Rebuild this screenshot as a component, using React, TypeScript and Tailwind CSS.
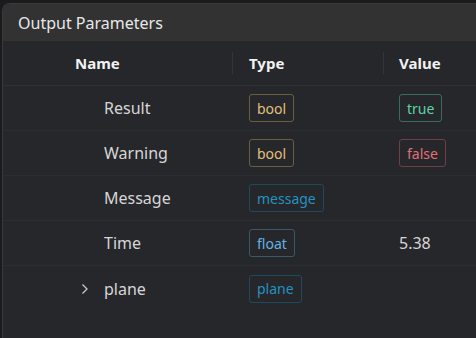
import React from 'react';

type Badge = { label: string; tone: 'bool' | 'msg' | 'float' | 'true' | 'false' };

interface Row {
  name: string;
  type: Badge;
  value?: Badge | string;
  expandable?: boolean;
}

const rows: Row[] = [
  { name: 'Result', type: { label: 'bool', tone: 'bool' }, value: { label: 'true', tone: 'true' } },
  { name: 'Warning', type: { label: 'bool', tone: 'bool' }, value: { label: 'false', tone: 'false' } },
  { name: 'Message', type: { label: 'message', tone: 'msg' } },
  { name: 'Time', type: { label: 'float', tone: 'float' }, value: '5.38' },
  { name: 'plane', type: { label: 'plane', tone: 'msg' }, expandable: true },
];

const toneClass: Record<Badge['tone'], string> = {
  bool: 'text-[#e2bf7d] border-[#6b5c44]',
  true: 'text-[#5dd4a4] border-[#3b6b5b]',
  false: 'text-[#e07078] border-[#6c4044]',
  msg: 'text-[#2592c0] border-[#1e4a5f]',
  float: 'text-[#62b2e6] border-[#3c5768]',
};

const Tag = ({ badge }: { badge: Badge }) => (
  <span className={`inline-flex items-center h-[28px] px-[7px] rounded-[3px] border text-[14px] ${toneClass[badge.tone]}`}>
    {badge.label}
  </span>
);

const Chevron = () => (
  <svg width="8" height="12" viewBox="0 0 8 12" fill="none" stroke="#c8c8c8" strokeWidth="1.3">
    <path d="M1.5 1.5 L6 6 L1.5 10.5" />
  </svg>
);

export default function App() {
  return (
    <div className="w-[476px] h-[338px] bg-[#1b1b1e] pt-[3px] pl-[2px] overflow-hidden" style={{ fontFamily: '"Noto Sans", "Open Sans", sans-serif' }}>
      <div className="h-full rounded-tl-[8px] border-l border-t border-[#3a3a3c] bg-[#26272b] overflow-hidden">
        <div className="h-[37px] bg-[#323233] flex items-center pl-[15px] text-[16px] text-[#e8e8e8]">
          Output Parameters
        </div>
        <div className="flex h-[45px] items-center border-b border-[#2f3034] text-[15px] font-bold text-[#f2f2f2]">
          <div className="w-[229px] pl-[72px]">Name</div>
          <div className="w-px h-[22px] bg-[#34353a]" />
          <div className="w-[150px] pl-[16px]">Type</div>
          <div className="w-px h-[22px] bg-[#34353a]" />
          <div className="flex-1 pl-[15px]">Value</div>
        </div>
        {rows.map((r) => (
          <div key={r.name} className="flex h-[45px] items-center border-b border-[#2c2d31] last:border-b-0 text-[16px] text-[#d6d6d6]">
            <div className="w-[230px] flex items-center">
              <div className="w-[101px] flex justify-end pr-[15px]">{r.expandable && <Chevron />}</div>
              <span>{r.name}</span>
            </div>
            <div className="w-[151px] pl-[16px]">
              <Tag badge={r.type} />
            </div>
            <div className="flex-1 pl-[15px]">
              {typeof r.value === 'string' ? <span>{r.value}</span> : r.value ? <Tag badge={r.value} /> : null}
            </div>
          </div>
        ))}
      </div>
    </div>
  );
}
